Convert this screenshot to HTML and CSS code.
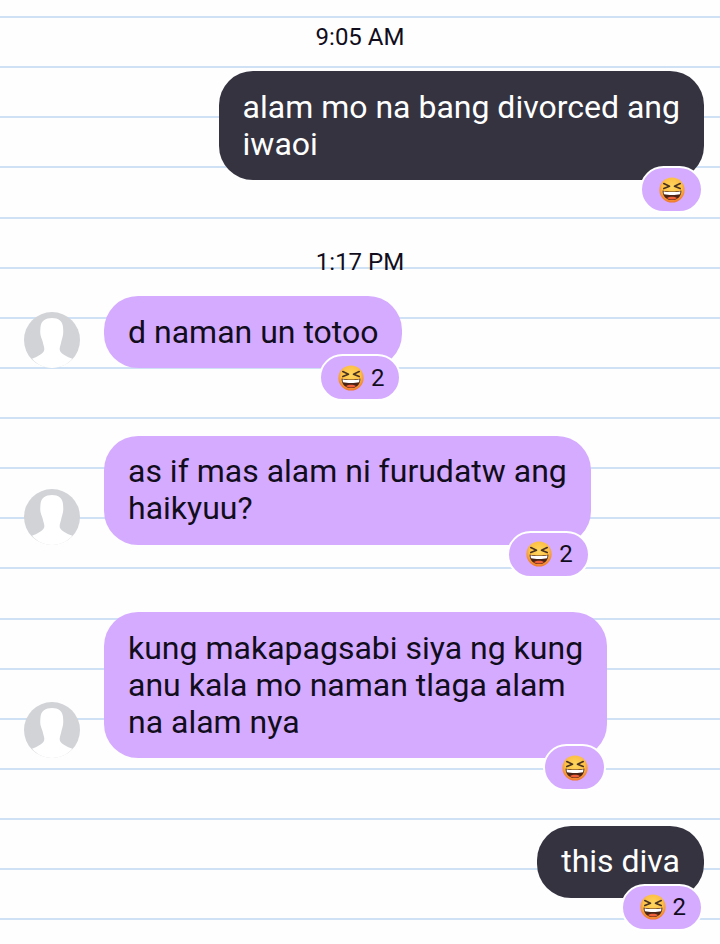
FILE: index.html
```html
<!DOCTYPE html>
<html lang="en">
<head>
  <meta charset="UTF-8">
  <meta name="viewport" content="width=device-width, initial-scale=1.0">
  <title>Chat</title>
  <link rel="stylesheet" href="styles.css">
</head>
<body>
  <svg class="defs" width="0" height="0" aria-hidden="true">
    <defs>
      <radialGradient id="face" cx="50%" cy="38%" r="62%">
        <stop offset="0%" stop-color="#ffd75e"/>
        <stop offset="62%" stop-color="#fdbf45"/>
        <stop offset="100%" stop-color="#f0742c"/>
      </radialGradient>
      <symbol id="laugh" viewBox="0 0 26 26">
        <circle cx="13" cy="13" r="12.6" fill="url(#face)"/>
        <path d="M4.8 6.600 10.500 9.200 4.800 11.500M21.200 6.600 15.500 9.200 21.200 11.500" fill="none" stroke="#4a3322" stroke-width="1.7" stroke-linecap="round" stroke-linejoin="round"/>
        <path d="M3.6 13.4C8 14.9 18 14.9 22.4 13.4 22.6 19 18.6 23 13 23S3.4 19 3.6 13.4Z" fill="#4a2417"/>
        <path d="M4.6 14.2C8.6 15.4 17.4 15.4 21.4 14.2 21.5 15.4 21.3 16.4 21 17.2 17 18.2 9 18.2 5 17.2 4.7 16.4 4.5 15.4 4.6 14.2Z" fill="#fff"/>
        <path d="M8 21C10.5 19.4 15.5 19.4 18 21 15.5 23 10.5 23 8 21Z" fill="#f0603a"/>
      </symbol>
      <symbol id="person" viewBox="0 0 56 56">
        <circle cx="28" cy="28" r="28" fill="#d1d3d7"/>
        <path d="M28 6C21.500 6 17 9 16.500 15C16.300 18 16 20 16.500 23C17 26 18.500 28 19 31C19.500 34 21 36 20 39C18.500 42 13 45 8 46.800C13 52.500 20 56 28 56C36 56 43.500 52.500 48.500 46.800C43 45 37.500 42 36 39C35 36 36.500 34 37 31C37.500 28 38.500 26 39 23C39.500 20 39.200 18 39 15C38.500 9 34.500 6 28 6Z" fill="#fff"/>
      </symbol>
    </defs>
  </svg>

  <main class="chat">
    <p class="time">9:05 AM</p>
    <div class="row mine">
      <div class="bubble">alam mo na bang divorced ang<br>iwaoi
        <span class="react"><svg class="emoji"><use href="#laugh"/></svg></span>
      </div>
    </div>

    <p class="time later">1:17 PM</p>
    <div class="row">
      <svg class="avatar"><use href="#person"/></svg>
      <div class="bubble">d naman un totoo
        <span class="react"><svg class="emoji"><use href="#laugh"/></svg><b>2</b></span>
      </div>
    </div>

    <div class="row spaced">
      <svg class="avatar"><use href="#person"/></svg>
      <div class="bubble">as if mas alam ni furudatw ang<br>haikyuu?
        <span class="react"><svg class="emoji"><use href="#laugh"/></svg><b>2</b></span>
      </div>
    </div>

    <div class="row spaced">
      <svg class="avatar"><use href="#person"/></svg>
      <div class="bubble">kung makapagsabi siya ng kung<br>anu kala mo naman tlaga alam<br>na alam nya
        <span class="react"><svg class="emoji"><use href="#laugh"/></svg></span>
      </div>
    </div>

    <div class="row mine spaced">
      <div class="bubble">this diva
        <span class="react"><svg class="emoji"><use href="#laugh"/></svg><b>2</b></span>
      </div>
    </div>
  </main>
</body>
</html>
```

FILE: styles.css
```css
html, body {
    margin: 0;
    height: 100%;
}

body {
    font-family: Roboto, "Liberation Sans", sans-serif;
    color: #120d1c;
    background-color: #fefefe;
    background-image: repeating-linear-gradient(
        to bottom,
        transparent 0,
        transparent 16px,
        #cfe2f5 16px,
        #cfe2f5 18px,
        transparent 18px,
        transparent 50.13px
    );
    overflow: hidden;
}

.defs {
    position: absolute;
}

.chat {
    padding: 23px 16px 0;
}

.time {
    margin: 0 0 20px;
    font-size: 24px;
    line-height: 28px;
    text-align: center;
}

.time.later {
    margin-top: 68px;
}

.row {
    display: flex;
    align-items: flex-end;
    gap: 24px;
    padding-left: 8px;
}

.row.spaced {
    margin-top: 67.5px;
}

.row.mine {
    justify-content: flex-end;
}

.avatar {
    flex: none;
    width: 56px;
    height: 56px;
}

.bubble {
    position: relative;
    box-sizing: border-box;
    padding: 17.5px 24px;
    border-radius: 34px;
    font-size: 32px;
    line-height: 37px;
    background-color: #d5abff;
}

.mine .bubble {
    color: #ffffff;
    background-color: #353340;
}

.react {
    position: absolute;
    right: 1px;
    bottom: -33px;
    display: flex;
    align-items: center;
    gap: 7px;
    height: 43px;
    padding: 0 16px 0 17px;
    border: 2px solid #ffffff;
    border-radius: 24px;
    background-color: #d5abff;
    color: #120d1c;
    font-size: 24px;
    line-height: 28px;
}

.react b {
    margin-right: -1px;
    font-weight: 400;
}

.emoji {
    width: 26px;
    height: 26px;
}
```
